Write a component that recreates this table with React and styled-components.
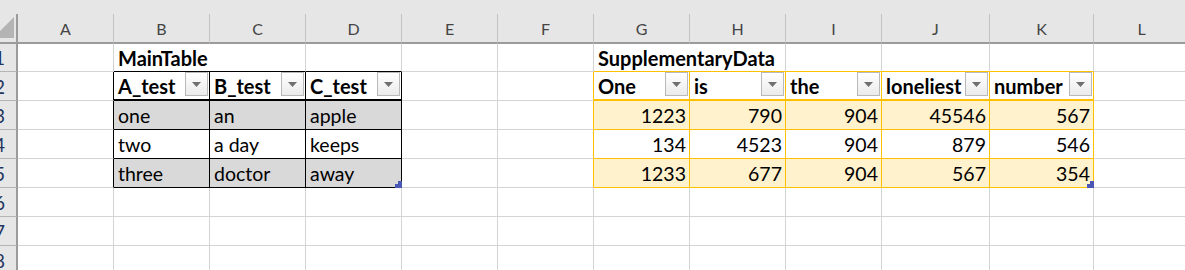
import React from 'react'
import styled, { createGlobalStyle } from 'styled-components'

const GlobalStyle = createGlobalStyle`
  html, body {
    margin: 0;
    padding: 0;
    background: #fff;
  }
  body {
    font-family: Lato, "Noto Sans", sans-serif;
    overflow: hidden;
  }
`

const COLS = [
  ['A', 96], ['B', 96], ['C', 96], ['D', 96], ['E', 96], ['F', 96],
  ['G', 96], ['H', 96], ['I', 96], ['J', 108], ['K', 104], ['L', 96],
]

const GRID = '#d4d4d4'

const TABLES = [
  {
    title: 'MainTable',
    col: 1,
    head: ['A_test', 'B_test', 'C_test'],
    rows: [
      ['one', 'an', 'apple'],
      ['two', 'a day', 'keeps'],
      ['three', 'doctor', 'away'],
    ],
    line: '#000',
    band: '#d9d9d9',
  },
  {
    title: 'SupplementaryData',
    col: 6,
    head: ['One', 'is', 'the', 'loneliest', 'number'],
    rows: [
      [1223, 790, 904, 45546, 567],
      [134, 4523, 904, 879, 546],
      [1233, 677, 904, 567, 354],
    ],
    line: '#ffc000',
    band: '#fff2cc',
  },
]

const Sheet = styled.div`
  display: grid;
  grid-template-columns: 18px ${COLS.map(c => c[1] + 'px').join(' ')};
  grid-template-rows: 14px 30px 28px repeat(7, 29px);
  width: 1185px;
  height: 270px;
  overflow: hidden;
`

const TopStrip = styled.div`
  grid-column: 1 / -1;
  background: #e6e6e6;
`

const Corner = styled.div`
  background: #e6e6e6;
  border-right: 2px solid #9b9b9b;
  border-bottom: 2px solid #9b9b9b;
  box-sizing: border-box;
  overflow: hidden;
`

const ColHead = styled.div`
  background: #e6e6e6;
  border-right: 1px solid #c4c4c4;
  border-bottom: 2px solid #9b9b9b;
  box-sizing: border-box;
  display: flex;
  justify-content: center;
  align-items: flex-end;
  padding-bottom: 5px;
  font-size: 16px;
  line-height: 16px;
  color: #444;
`

const RowHead = styled.div`
  background: #e6e6e6;
  border-right: 2px solid #9b9b9b;
  border-bottom: 1px solid #b4b4b4;
  box-sizing: border-box;
  display: flex;
  justify-content: flex-end;
  align-items: flex-end;
  padding: 0 11px 4px 0;
  overflow: hidden;
  font-size: 19px;
  line-height: 19px;
  color: #23355e;
`

const Cell = styled.div`
  grid-column: span ${p => p.$span || 1};
  position: relative;
  box-sizing: border-box;
  min-width: 0;
  display: flex;
  align-items: flex-end;
  justify-content: ${p => p.$align || 'flex-start'};
  padding: 0 ${p => p.$padRight ?? 3}px 3px 4px;
  background: ${p => p.$bg || '#fff'};
  border-right: 1px solid ${p => p.$right || GRID};
  border-bottom: ${p => p.$bottomW || 1}px solid ${p => p.$bottom || GRID};
  font-size: ${p => (p.$bold ? 20 : 19.5)}px;
  line-height: 20px;
  font-weight: ${p => (p.$bold ? 700 : 400)};
  color: #000;
  white-space: nowrap;
`

const HeadText = styled.span`
  flex: 1;
  align-self: flex-end;
`

const FilterButton = styled.div`
  align-self: center;
  width: 23px;
  height: 24px;
  box-sizing: border-box;
  border: 1px solid #b9b9b9;
  background: linear-gradient(#ffffff, #ebebeb);
  display: flex;
  align-items: center;
  justify-content: center;
`

const FillHandle = styled.svg`
  position: absolute;
  right: -1px;
  bottom: -1px;
`

function CornerMark() {
  return (
    <svg width="16" height="28" viewBox="0 0 16 28">
      <polygon points="14,3 14,24 0,24 0,17" fill="#b4b4b4" />
    </svg>
  )
}

function FilterArrow() {
  return (
    <FilterButton>
      <svg width="9" height="5" viewBox="0 0 9 5">
        <polygon points="0,0 9,0 4.5,5" fill="#6f6f6f" />
      </svg>
    </FilterButton>
  )
}

function Handle() {
  return (
    <FillHandle width="7" height="7" viewBox="0 0 7 7">
      <polygon points="3,0 7,0 7,7 0,7 0,3 3,3" fill="#4a57b5" />
    </FillHandle>
  )
}

// works out what one sheet cell shows: content, fill and the borders it owns
function describeCell(r, c) {
  const cell = { right: GRID, bottom: GRID, bottomW: 1, bg: '#fff' }
  for (const t of TABLES) {
    const n = t.head.length
    const last = t.col + n - 1
    const inCols = c >= t.col && c <= last
    if (r >= 2 && r <= 5 && c >= t.col - 1 && c <= last) cell.right = t.line
    if (inCols && r >= 1 && r <= 5) {
      cell.bottom = t.line
      if (r === 2) cell.bottomW = 2
    }
    if (r === 1 && c === t.col) {
      cell.text = t.title
      cell.bold = true
      cell.span = 2
    }
    if (r === 1 && c === t.col + 1) cell.skip = true
    if (!inCols) continue
    if (r === 3 || r === 5) cell.bg = t.band
    if (r === 2) {
      cell.text = t.head[c - t.col]
      cell.bold = true
      cell.filter = true
    }
    if (r >= 3 && r <= 5) {
      const v = t.rows[r - 3][c - t.col]
      cell.text = String(v)
      cell.numeric = typeof v === 'number'
      cell.handle = r === 5 && c === last
    }
  }
  return cell
}

function SheetCell({ r, c }) {
  const d = describeCell(r, c)
  if (d.skip) return null
  return (
    <Cell
      $span={d.span}
      $bg={d.bg}
      $right={d.right}
      $bottom={d.bottom}
      $bottomW={d.bottomW}
      $bold={d.bold}
      $align={d.numeric ? 'flex-end' : 'flex-start'}
      $padRight={d.filter ? 1 : 3}
    >
      {d.filter ? (
        <>
          <HeadText>{d.text}</HeadText>
          <FilterArrow />
        </>
      ) : (
        d.text
      )}
      {d.handle && <Handle />}
    </Cell>
  )
}

export default function App() {
  const rows = [1, 2, 3, 4, 5, 6, 7, 8]
  return (
    <>
      <GlobalStyle />
      <Sheet>
        <TopStrip />
        <Corner>
          <CornerMark />
        </Corner>
        {COLS.map(([name]) => (
          <ColHead key={name}>{name}</ColHead>
        ))}
        {rows.map(r => (
          <React.Fragment key={r}>
            <RowHead>{r}</RowHead>
            {COLS.map((_, c) => (
              <SheetCell key={c} r={r} c={c} />
            ))}
          </React.Fragment>
        ))}
      </Sheet>
    </>
  )
}
